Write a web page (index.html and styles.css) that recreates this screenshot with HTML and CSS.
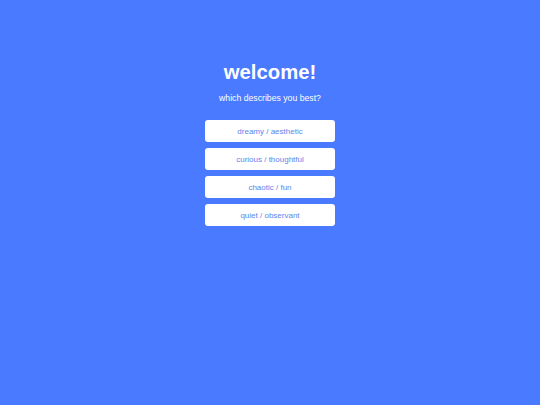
FILE: index.html
```html
<!DOCTYPE html>
<html>
<head>
<meta charset="utf-8">
<link rel="stylesheet" href="styles.css">
</head>
<body>
<main class="screen">
  <h1 class="title">welcome!</h1>
  <p class="subtitle">which describes you best?</p>
  <div class="options">
    <button class="option">dreamy / aesthetic</button>
    <button class="option">curious / thoughtful</button>
    <button class="option">chaotic / fun</button>
    <button class="option">quiet / observant</button>
  </div>
</main>
</body>
</html>
```
FILE: styles.css
```css
html, body {
  margin: 0;
  padding: 0;
  background: #4a7aff;
  height: 100%;
}
.screen {
  display: flex;
  flex-direction: column;
  align-items: center;
  padding-top: 60px;
  font-family: "Liberation Sans", Arial, sans-serif;
  color: #ffffff;
}
.title {
  margin: 0;
  font-size: 20.3px;
  font-weight: bold;
  line-height: 24px;
}
.subtitle {
  margin: 8px 0 0 0;
  font-size: 8.7px;
  line-height: 12px;
}
.options {
  margin-top: 16px;
  display: flex;
  flex-direction: column;
  gap: 6px;
}
.option {
  width: 130px;
  height: 22px;
  border: none;
  border-radius: 3px;
  background: #ffffff;
  color: #5c84ee;
  font-family: "Liberation Sans", Arial, sans-serif;
  font-size: 8px;
  padding: 0;
}
```
